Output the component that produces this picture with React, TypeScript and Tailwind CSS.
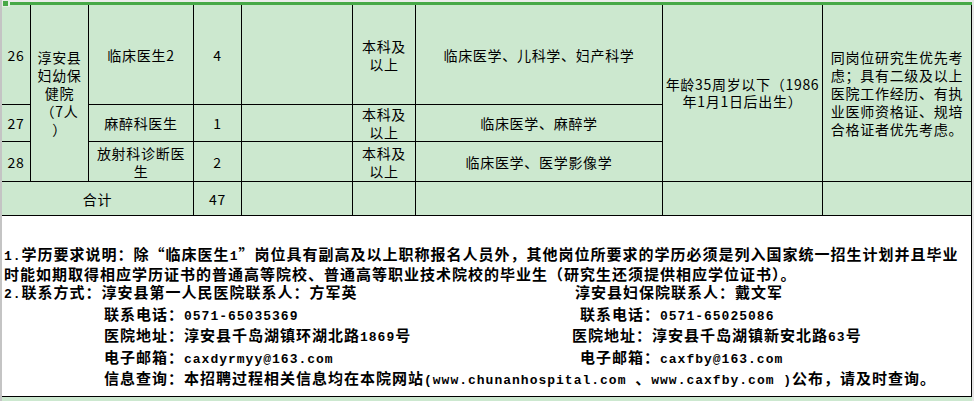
import React from "react";

const GREEN = "bg-[#cce8cf]";

function Mono({ children }: { children: React.ReactNode }) {
  return (
    <span className="font-['Liberation_Mono','Noto_Sans_CJK_SC',monospace] text-[13px]">
      {children}
    </span>
  );
}

function Cell({
  className = "",
  children,
}: {
  className?: string;
  children?: React.ReactNode;
}) {
  return (
    <div
      className={`flex items-center justify-center text-center border-r border-b border-black ${className}`}
    >
      {children}
    </div>
  );
}

export default function App() {
  return (
    <div className="relative w-[974px] h-[401px] flex overflow-hidden bg-white text-black font-['Noto_Sans_CJK_SC',sans-serif]">
      <div className="w-[2px] bg-[#c4c4c4]" />

      <div className="w-[970px] flex flex-col">
        {/* selected row marker */}
        <div className="h-[2px] bg-[#ececec]" />
        <div className="h-[3px] bg-[#47a947]" />

        <div
          className={`grid grid-cols-[29px_58px_105px_48px_111px_63px_247px_160px_149px] grid-rows-[100px_37px_40px_34px] ${GREEN} text-[14px] tracking-[0.7px] leading-[18px]`}
        >
          <Cell className="col-start-1 row-start-1">26</Cell>
          <Cell className="col-start-2 row-start-1 row-span-3">
            <div>
              淳安县
              <br />
              妇幼保
              <br />
              健院
              <br />
              （7人
              <br />）
            </div>
          </Cell>
          <Cell className="col-start-3 row-start-1">临床医生2</Cell>
          <Cell className="col-start-4 row-start-1">4</Cell>
          <Cell className="col-start-5 row-start-1" />
          <Cell className="col-start-6 row-start-1">
            <div>
              本科及
              <br />
              以上
            </div>
          </Cell>
          <Cell className="col-start-7 row-start-1">临床医学、儿科学、妇产科学</Cell>
          <Cell className="col-start-8 row-start-1 row-span-3 leading-[17px]">
            <div>
              年龄35周岁以下（1986
              <br />
              年1月1日后出生）
            </div>
          </Cell>
          <Cell className="col-start-9 row-start-1 row-span-3">
            <div className="text-left">
              同岗位研究生优先考
              <br />
              虑；具有二级及以上
              <br />
              医院工作经历、有执
              <br />
              业医师资格证、规培
              <br />
              合格证者优先考虑。
            </div>
          </Cell>

          <Cell className="col-start-1 row-start-2">27</Cell>
          <Cell className="col-start-3 row-start-2">麻醉科医生</Cell>
          <Cell className="col-start-4 row-start-2">1</Cell>
          <Cell className="col-start-5 row-start-2" />
          <Cell className="col-start-6 row-start-2">
            <div>
              本科及
              <br />
              以上
            </div>
          </Cell>
          <Cell className="col-start-7 row-start-2">临床医学、麻醉学</Cell>

          <Cell className="col-start-1 row-start-3">28</Cell>
          <Cell className="col-start-3 row-start-3">
            <div>
              放射科诊断医
              <br />生
            </div>
          </Cell>
          <Cell className="col-start-4 row-start-3">2</Cell>
          <Cell className="col-start-5 row-start-3" />
          <Cell className="col-start-6 row-start-3">
            <div>
              本科及
              <br />
              以上
            </div>
          </Cell>
          <Cell className="col-start-7 row-start-3">临床医学、医学影像学</Cell>

          <Cell className="col-start-1 col-span-3 row-start-4">合计</Cell>
          <Cell className="col-start-4 row-start-4">47</Cell>
          <Cell className="col-start-5 row-start-4" />
          <Cell className="col-start-6 row-start-4" />
          <Cell className="col-start-7 row-start-4" />
          <Cell className="col-start-8 row-start-4" />
          <Cell className="col-start-9 row-start-4" />
        </div>

        {/* notes box */}
        <div className="h-[181px] bg-white border-r border-b border-black pl-[2px] pt-[28.5px] text-[15px] font-bold tracking-[1px] whitespace-nowrap">
          <div className="leading-[17px]">
            <Mono>1.</Mono>学历要求说明：除“临床医生<Mono>1</Mono>”岗位具有副高及以上职称报名人员外，其他岗位所要求的学历必须是列入国家统一招生计划并且毕业
            <br />
            时能如期取得相应学历证书的普通高等院校、普通高等职业技术院校的毕业生（研究生还须提供相应学位证书）。
          </div>
          <div className="mt-[1.5px] leading-[18.5px]">
            <div className="flex">
              <div className="w-[571px]">
                <Mono>2.</Mono>联系方式：淳安县第一人民医院联系人：方军英
              </div>
              <div>淳安县妇保院联系人：戴文军</div>
            </div>
            <div className="flex">
              <div className="w-[576px] pl-[100px]">
                联系电话：<Mono>0571-65035369</Mono>
              </div>
              <div>
                联系电话：<Mono>0571-65025086</Mono>
              </div>
            </div>
            <div className="flex">
              <div className="w-[568px] pl-[100px]">
                医院地址：淳安县千岛湖镇环湖北路<Mono>1869</Mono>号
              </div>
              <div>
                医院地址：淳安县千岛湖镇新安北路<Mono>63</Mono>号
              </div>
            </div>
            <div className="flex">
              <div className="w-[576px] pl-[100px]">
                电子邮箱：<Mono>caxdyrmyy@163.com</Mono>
              </div>
              <div>
                电子邮箱：<Mono>caxfby@163.com</Mono>
              </div>
            </div>
            <div className="pl-[100px]">
              信息查询：本招聘过程相关信息均在本院网站<Mono>(www.chunanhospital.com </Mono>、<Mono>www.caxfby.com )</Mono>公布，请及时查询。
            </div>
          </div>
        </div>

        <div className={`flex-1 ${GREEN}`} />
      </div>

      <div className="w-[2px] bg-[#e6e6e6]" />

      {/* fill handle */}
      <div className="absolute left-[2px] top-0 w-[8px] h-[7px] bg-[#e3f0e3] p-[1px]">
        <div className="w-[5px] h-[5px] bg-[#47a947]" />
      </div>
    </div>
  );
}
